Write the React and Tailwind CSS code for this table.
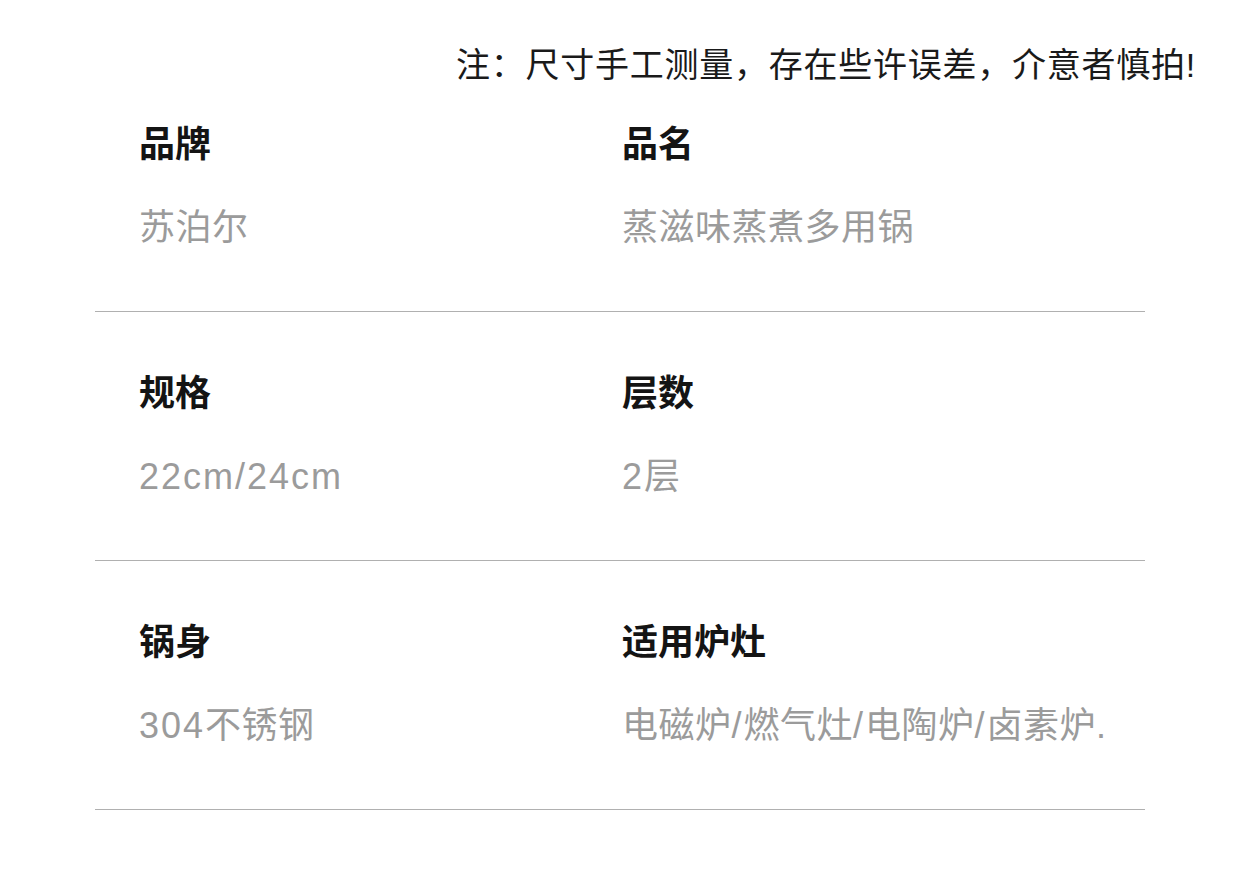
import React from 'react';

const rows = [
  [
    { label: '品牌', value: '苏泊尔' },
    { label: '品名', value: '蒸滋味蒸煮多用锅' },
  ],
  [
    { label: '规格', value: '22cm/24cm' },
    { label: '层数', value: '2层' },
  ],
  [
    { label: '锅身', value: '304不锈钢' },
    { label: '适用炉灶', value: '电磁炉/燃气灶/电陶炉/卤素炉.' },
  ],
];

// latin runs are wider in the source font, give them extra spacing
const Value = ({ text }) =>
  text.split(/([A-Za-z0-9/.]+)/).map((part, i) =>
    /^[A-Za-z0-9/.]+$/.test(part) ? (
      <span key={i} className="tracking-[2px]">{part}</span>
    ) : (
      <span key={i} className="tracking-[0.5px]">{part}</span>
    )
  );

const Cell = ({ label, value }) => (
  <div className="flex flex-col">
    <div className="text-[36px] leading-[36px] font-bold text-[#141414]">{label}</div>
    <div className="mt-[47px] text-[36px] leading-[36px] text-[#9b9b9b] whitespace-nowrap">
      <Value text={value} />
    </div>
  </div>
);

export default function App() {
  return (
    <div
      className="w-[1240px] h-[870px] bg-white overflow-hidden"
      style={{ fontFamily: '"Liberation Sans", "Noto Sans CJK SC", sans-serif' }}
    >
      <div className="pt-[48px] pr-[44px] flex justify-end">
        <p className="text-[34px] leading-[34px] tracking-[0.75px] text-[#1a1a1a] whitespace-nowrap">
          注：尺寸手工测量，存在些许误差，介意者慎拍!
        </p>
      </div>

      <div className="ml-[95px] w-[1050px] mt-[45px]">
        {rows.map((row, i) => (
          <div
            key={i}
            className={`grid grid-cols-[483px_1fr] pl-[44px] pb-[65px] border-b border-[#b0b0b0] ${i === 0 ? '' : 'pt-[64px]'}`}
          >
            {row.map((c) => (
              <Cell key={c.label} label={c.label} value={c.value} />
            ))}
          </div>
        ))}
      </div>
    </div>
  );
}
